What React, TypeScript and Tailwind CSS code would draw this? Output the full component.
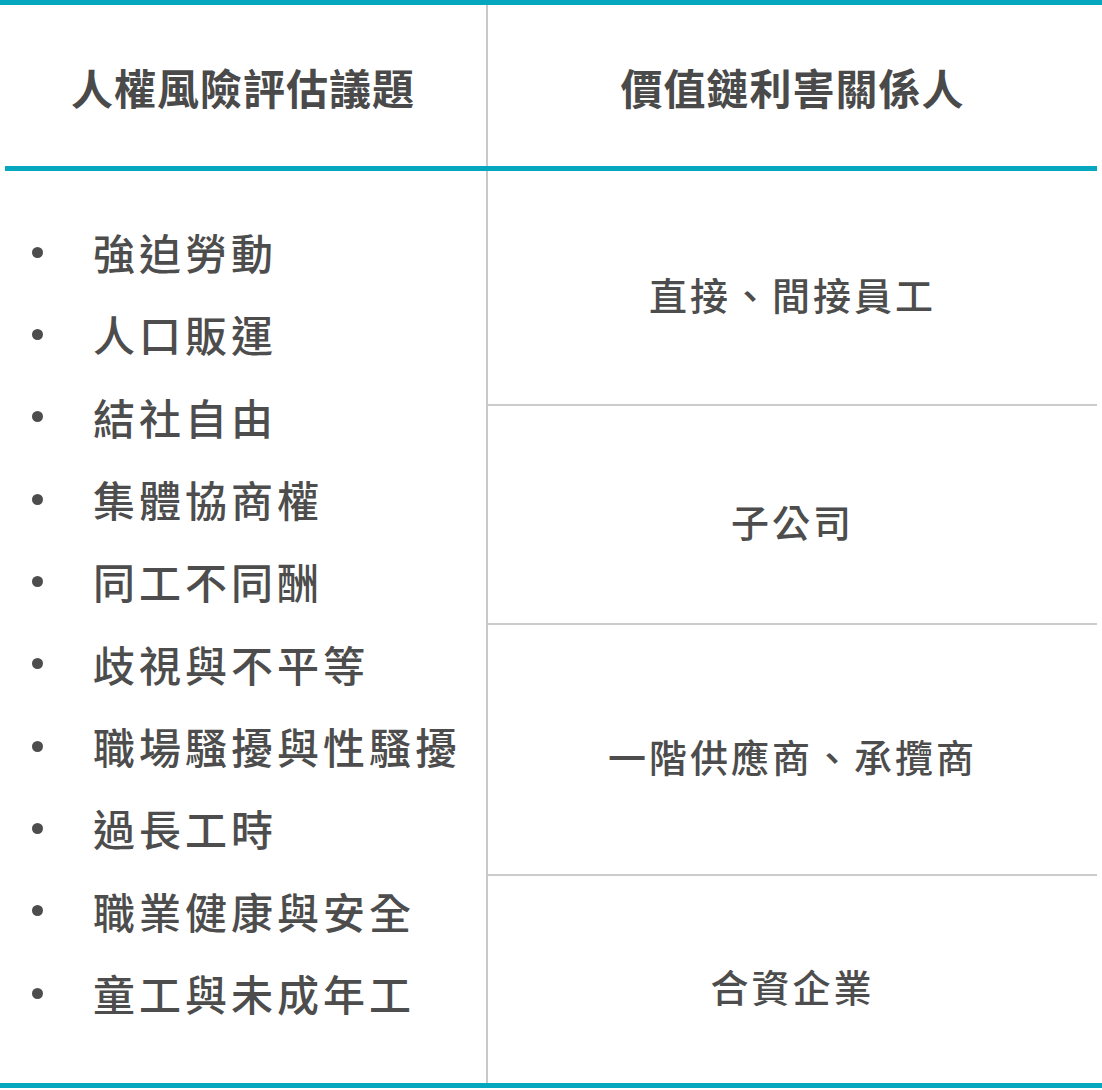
import React from "react";

const issues = [
  "強迫勞動",
  "人口販運",
  "結社自由",
  "集體協商權",
  "同工不同酬",
  "歧視與不平等",
  "職場騷擾與性騷擾",
  "過長工時",
  "職業健康與安全",
  "童工與未成年工",
];

function RightCell({ text, h }: { text: string; h: string }) {
  return (
    <div className={`${h} flex items-center justify-center pt-[12px]`}>
      <span className="text-[38px] font-medium tracking-[3px] text-[#4d4d4d] leading-none">{text}</span>
    </div>
  );
}

export default function App() {
  return (
    <div
      className="w-[1102px] h-[1090px] bg-white flex flex-col"
      style={{ fontFamily: '"Noto Sans CJK TC", "Noto Sans", sans-serif' }}
    >
      <div className="h-[5px] bg-[#04a7bd]" />
      <div className="flex h-[161px]">
        <div className="w-[486px] flex items-center justify-center pt-[2px]">
          <span className="text-[42px] font-bold tracking-[1px] text-[#4a4a4a] leading-none">人權風險評估議題</span>
        </div>
        <div className="w-[2px] bg-[#c8c8c8]" />
        <div className="flex-1 pr-[5px] flex items-center justify-center pt-[2px]">
          <span className="text-[42px] font-bold tracking-[1px] text-[#4a4a4a] leading-none">價值鏈利害關係人</span>
        </div>
      </div>
      <div className="mx-[5px] h-[5px] bg-[#04a7bd]" />
      <div className="flex h-[912px]">
        <div className="w-[486px] pt-[40px]">
          <ul>
            {issues.map((t) => (
              <li key={t} className="h-[82.33px] flex items-center">
                <span className="ml-[32px] w-[11px] h-[11px] rounded-full bg-[#4d4d4d]" />
                <span className="ml-[50px] text-[42px] font-medium tracking-[4px] text-[#4d4d4d] leading-none">{t}</span>
              </li>
            ))}
          </ul>
        </div>
        <div className="w-[2px] bg-[#c8c8c8]" />
        <div className="flex-1 pr-[5px] flex flex-col">
          <RightCell text="直接、間接員工" h="h-[233px]" />
          <div className="h-[2px] bg-[#cccccc]" />
          <RightCell text="子公司" h="h-[217px]" />
          <div className="h-[2px] bg-[#cccccc]" />
          <RightCell text="一階供應商、承攬商" h="h-[249px]" />
          <div className="h-[2px] bg-[#cccccc]" />
          <RightCell text="合資企業" h="h-[207px]" />
        </div>
      </div>
      <div className="h-[5px] bg-[#04a7bd]" />
    </div>
  );
}
